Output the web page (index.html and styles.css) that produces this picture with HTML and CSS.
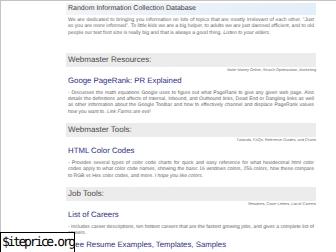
FILE: index.html
```html
<!DOCTYPE html>
<html>

	<head>
		<meta charset="UTF-8">
		<title>Random Information Collection Database</title>
		<link rel="stylesheet" href="styles.css">
	</head>

	<body>
		<div class="page">
			<div class="side"></div>
			<div class="main">
				<h1 class="title">Random Information Collection Database</h1>
				<p class="intro">We are dedicated to bringing you information on lots of topics that are mostly irrelevant of each other. "Just so you are more informed". To little kids we are a big helper, to adults we are just damned efficient, and to old people our text font size is really big and that is always a good thing. <em>Listen to your elders.</em></p>

				<div class="section">
					<h2 class="sec-head">Webmaster Resources:</h2>
					<div class="sec-tags">Make Money Online, Search Optimization, Marketing</div>
					<div class="entry">
						<a href="" class="entry-link">Googe PageRank: PR Explained</a>
						<p class="entry-desc">- Discusses the math equations Google uses to figure out what PageRank to give any given web page. Also details the definitions and affects of Internal, Inbound, and Outbound links, Dead End or Dangling links as well as other information about the Google Toolbar and how to effectively channel and displace PageRank values how you want to. <em>Link Farms are evil!</em></p>
					</div>
				</div>

				<div class="section">
					<h2 class="sec-head">Webmaster Tools:</h2>
					<div class="sec-tags">Tutorials, FAQs, Reference Guides, and Charts</div>
					<div class="entry">
						<a href="" class="entry-link">HTML Color Codes</a>
						<p class="entry-desc">- Provides several types of color code charts for quick and easy reference for what hexidecimal html color codes apply to what color code names, showing the basic 16 windows colors, 256 colors, how these compare to RGB vs Hex color codes, and more. <em>I hope you like colors.</em></p>
					</div>
				</div>

				<div class="section">
					<h2 class="sec-head">Job Tools:</h2>
					<div class="sec-tags">Resumes, Cover Letters, List of Careers</div>
					<div class="entry">
						<a href="" class="entry-link">List of Careers</a>
						<p class="entry-desc">- Includes career descriptions, ten hottest careers that are the fastest growing jobs, and gives a complete list of careers.</p>
					</div>
					<div class="entry">
						<a href="" class="entry-link">Free Resume Examples, Templates, Samples</a>
						<p class="entry-desc">- Lots of resume examples and templates for almost every kind of job you could be looking for.</p>
					</div>
				</div>
			</div>
		</div>
		<div class="stamp">$iteprice.org</div>
	</body>

</html>
```

FILE: styles.css
```css
html,
body {
	margin: 0;
	padding: 0;
	background: #fff;
	font-family: "Liberation Sans", Arial, sans-serif;
	text-rendering: geometricPrecision;
	overflow: hidden;
}

a {
	text-decoration: none;
}

.page {
	display: flex;
	height: 252px;
	border-top: 1px solid #c4c4c4;
	border-left: 1px solid #c4c4c4;
	box-sizing: border-box;
}

.side {
	width: 65px;
	flex: none;
}

.main {
	width: 250px;
	padding-top: 2px;
}

.title {
	margin: 0;
	padding: 0 2px;
	height: 12px;
	line-height: 12px;
	font-size: 7px;
	font-weight: normal;
	color: #3a3a3a;
	background: linear-gradient(to right, #f3f4f6, #e2eefa);
}

.intro {
	margin: 2px 0 17px;
	padding: 0 2px;
	font-size: 5.1px;
	line-height: 6.3px;
	color: #666;
	text-align: justify;
}

.section {
	margin-bottom: 8px;
}

.sec-head {
	margin: 0;
	padding: 0 2px;
	height: 14px;
	line-height: 14px;
	font-size: 8px;
	font-weight: normal;
	color: #484848;
	background: #ececec;
}

.sec-tags {
	text-align: right;
	font-size: 3.8px;
	line-height: 6px;
	color: #666;
}

.entry {
	padding: 0 2px;
}

.entry-link {
	display: block;
	margin-top: 3px;
	font-size: 7.8px;
	line-height: 10px;
	color: #2e2e8c;
}

.entry-desc {
	margin: 4px 0 0;
	font-size: 5px;
	line-height: 6.3px;
	color: #666;
	text-align: justify;
}

.stamp {
	position: absolute;
	left: 0;
	top: 232px;
	width: 72px;
	height: 19px;
	padding-left: 1px;
	border: 1px solid #000;
	background: #fff;
	overflow: hidden;
	color: #000;
	font-family: "DejaVu Sans Mono", monospace;
	font-size: 13px;
	line-height: 19px;
	letter-spacing: -2.3px;
	white-space: nowrap;
}
```
